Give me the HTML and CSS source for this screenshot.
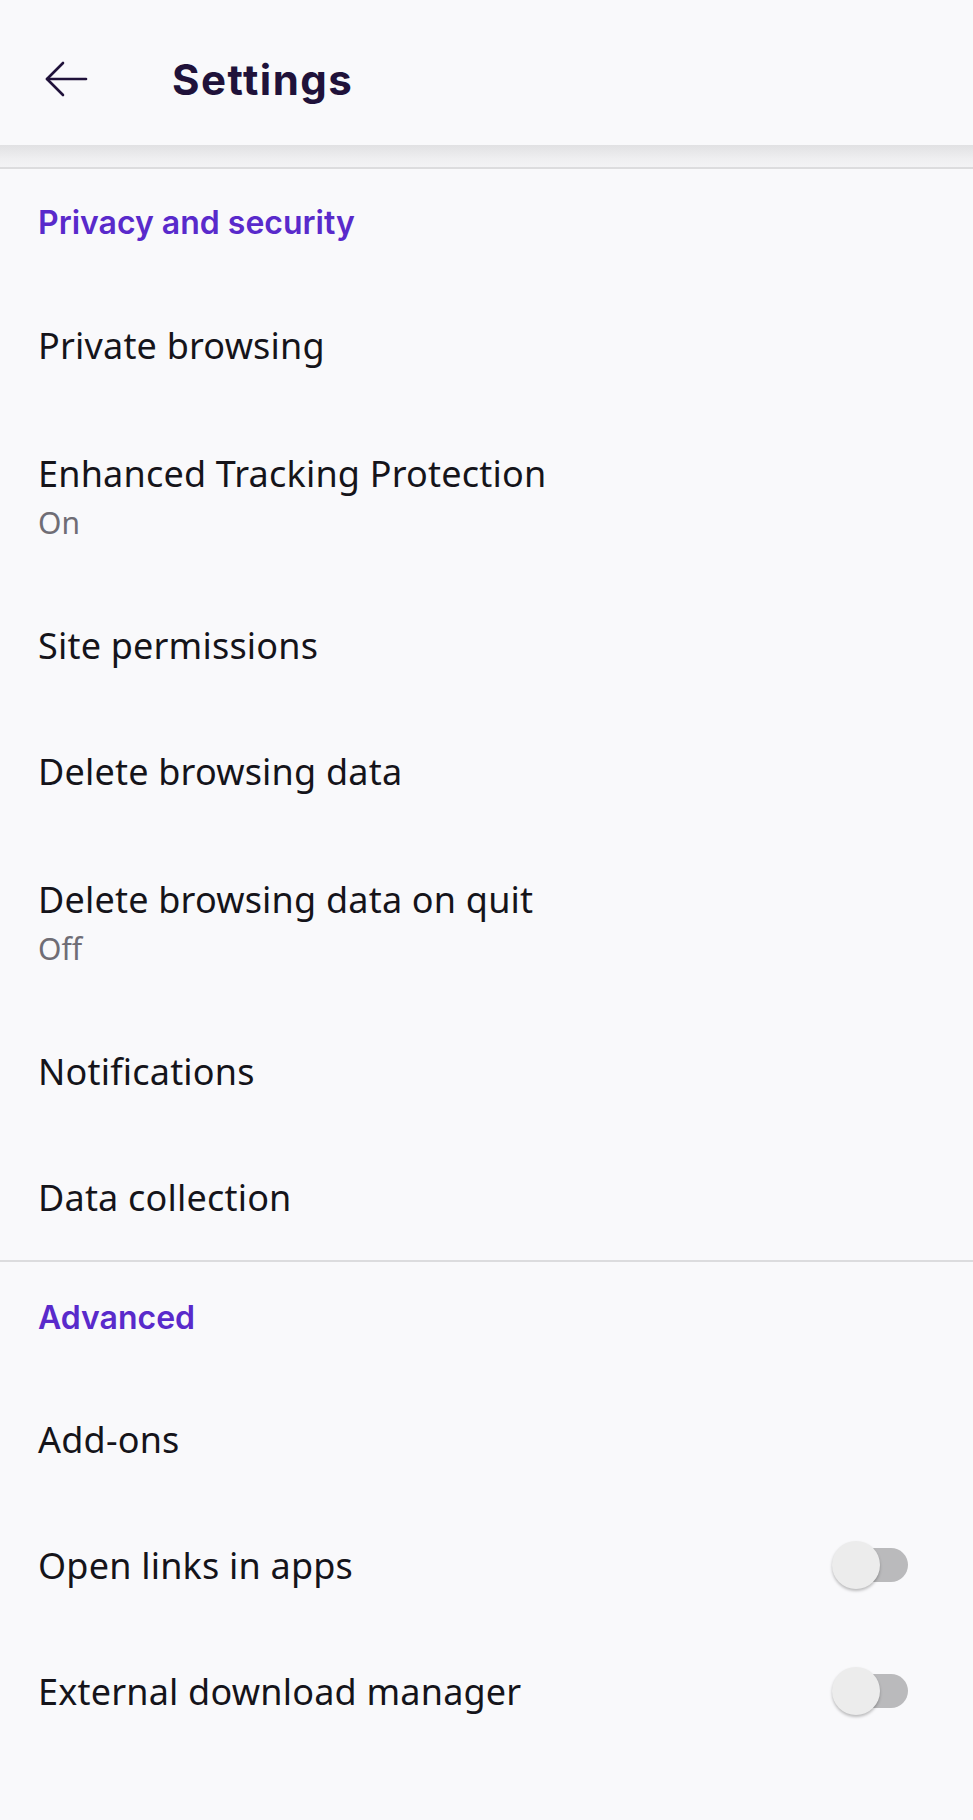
FILE: index.html
```html
<!DOCTYPE html>
<html lang="en">
<head>
    <meta charset="UTF-8">
    <meta name="viewport" content="width=device-width, initial-scale=1.0">
    <title>Settings</title>
    <link rel="stylesheet" href="styles.css">
</head>
<body>
    <!-- Top toolbar -->
    <header class="toolbar">
        <button class="back-button" aria-label="Back">
            <svg width="44" height="38" viewBox="0 0 44 38" fill="none" stroke="#20123a" stroke-width="2.6" stroke-linecap="round" stroke-linejoin="round">
                <path d="M42 19H3"/>
                <path d="M19 3L3 19L19 35"/>
            </svg>
        </button>
        <h1 class="toolbar-title">Settings</h1>
    </header>
    <div class="toolbar-shadow"></div>

    <section class="pref-section">
        <h2 class="section-title">Privacy and security</h2>
        <div class="pref"><div class="pref-text"><span class="pref-title">Private browsing</span></div></div>
        <div class="pref has-summary">
            <div class="pref-text">
                <span class="pref-title">Enhanced Tracking Protection</span>
                <span class="pref-summary">On</span>
            </div>
        </div>
        <div class="pref"><div class="pref-text"><span class="pref-title">Site permissions</span></div></div>
        <div class="pref"><div class="pref-text"><span class="pref-title">Delete browsing data</span></div></div>
        <div class="pref has-summary">
            <div class="pref-text">
                <span class="pref-title">Delete browsing data on quit</span>
                <span class="pref-summary">Off</span>
            </div>
        </div>
        <div class="pref"><div class="pref-text"><span class="pref-title">Notifications</span></div></div>
        <div class="pref"><div class="pref-text"><span class="pref-title">Data collection</span></div></div>
    </section>

    <section class="pref-section advanced">
        <h2 class="section-title">Advanced</h2>
        <div class="pref"><div class="pref-text"><span class="pref-title">Add-ons</span></div></div>
        <div class="pref with-switch">
            <div class="pref-text"><span class="pref-title">Open links in apps</span></div>
            <span class="switch"><span class="track"></span><span class="thumb"></span></span>
        </div>
        <div class="pref with-switch">
            <div class="pref-text"><span class="pref-title">External download manager</span></div>
            <span class="switch"><span class="track"></span><span class="thumb"></span></span>
        </div>
    </section>
</body>
</html>
```

FILE: styles.css
```css
body {
    margin: 0;
    background-color: #f9f9fb;
    color: #15141a;
    font-family: "Noto Sans", "Open Sans", sans-serif;
}

.toolbar {
    display: flex;
    align-items: center;
    height: 145px;
    box-sizing: border-box;
    padding: 13px 0 0 44px;
    background-color: #f9f9fb;
}

.back-button {
    display: flex;
    background: none;
    border: none;
    padding: 0;
    margin: 0;
    cursor: pointer;
}

.toolbar-title {
    margin: 0 0 0 84px;
    font-family: Inter, "Liberation Sans", sans-serif;
    font-size: 42px;
    font-weight: 700;
    color: #20123a;
    letter-spacing: 1.5px;
}

/* soft shadow under the toolbar */
.toolbar-shadow {
    height: 22px;
    background: linear-gradient(#e1e1e3, #eeeef0 60%, #f3f3f5);
}

.pref-section {
    border-top: 2px solid #dcdcde;
}

.section-title {
    margin: 0;
    padding: 34px 38px 39px;
    font-family: Inter, "Liberation Sans", sans-serif;
    font-size: 32px;
    font-weight: 600;
    line-height: 40px;
    color: #592acb;
}

.advanced .section-title {
    padding-top: 36px;
    padding-bottom: 38px;
}

.pref {
    display: flex;
    align-items: center;
    justify-content: space-between;
    min-height: 126px;
    box-sizing: border-box;
    padding: 0 38px;
}

.pref.has-summary {
    min-height: 174px;
    padding-top: 5px;
}

.pref.with-switch {
    padding-right: 65px;
}

.pref-text {
    display: flex;
    flex-direction: column;
}

.pref-title {
    font-size: 36px;
    line-height: 49px;
    letter-spacing: 0.2px;
}

.pref-summary {
    font-size: 30px;
    line-height: 49px;
    color: #6f6d75;
}

.switch {
    position: relative;
    width: 76px;
    height: 48px;
}

.switch .track {
    position: absolute;
    left: 8px;
    top: 7px;
    width: 68px;
    height: 34px;
    border-radius: 17px;
    background-color: #bababc;
}

.switch .thumb {
    position: absolute;
    left: 0;
    top: 0;
    width: 48px;
    height: 48px;
    border-radius: 50%;
    background-color: #ececec;
    box-shadow: 0 2px 3px rgba(0, 0, 0, 0.25);
}
```
